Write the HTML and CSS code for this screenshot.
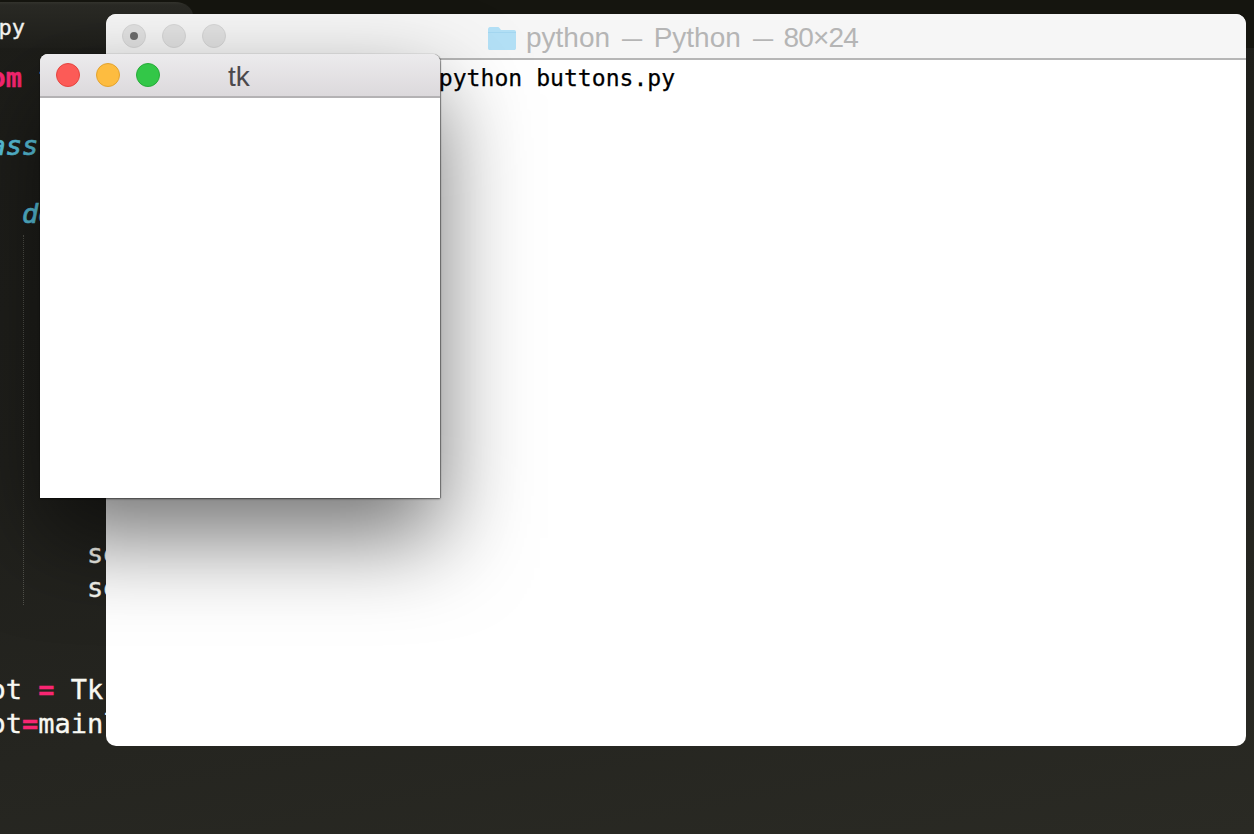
FILE: index.html
```html
<!DOCTYPE html>
<html lang="en">
<head>
<meta charset="utf-8">
<title>tk</title>
<link rel="stylesheet" href="styles.css">
</head>
<body>
<main class="desktop">
  <section class="editor">
    <div class="tabbar"><div class="tab"><span class="tab-name">buttons.py</span></div></div>
    <div class="code">
      <div class="guide"></div>
      <div class="line"><span class="kw">from</span> <span class="fn">tkinter</span> <span class="kw">import</span> *</div>
      <div class="line"></div>
      <div class="line"><span class="def">class</span> <span class="fn">App</span>:</div>
      <div class="line"></div>
      <div class="line">    <span class="def">def</span> __init__(self, master):</div>
      <div class="line"></div><div class="line"></div><div class="line"></div><div class="line"></div><div class="line"></div>
      <div class="line"></div><div class="line"></div><div class="line"></div><div class="line"></div>
      <div class="line dim">        self.button.pack()</div>
      <div class="line dim">        self.quit.pack()</div>
      <div class="line"></div>
      <div class="line"></div>
      <div class="line">root <span class="kw">=</span> Tk()</div>
      <div class="line">root<span class="kw">=</span>mainloop()</div>
    </div>
  </section>

  <section class="window terminal">
    <header class="term-bar">
      <div class="lights">
        <span class="light gray"><span class="dot"></span></span>
        <span class="light gray"></span>
        <span class="light gray"></span>
      </div>
      <div class="term-title">
        <svg class="folder" viewBox="0 0 30 25" width="30" height="25" aria-hidden="true">
          <path d="M1 3.500C1 2 1.800 1 3 1h7.500c1 0 1.600.4 2.200 1.200L14 4h13.200c1 0 1.800.8 1.800 1.800v16.400c0 1-.8 1.800-1.800 1.800H2.800C1.800 24 1 23.200 1 22.200z" fill="#b3e0f6"/>
          <path d="M1 6.500h28" stroke="#a4d7f1" stroke-width="1" fill="none"/>
        </svg>
        <span>python <span class="dash">—</span> Python <span class="dash">—</span> <span class="size">80×24</span></span>
      </div>
    </header>
    <div class="term-body">$ python buttons.py</div>
  </section>

  <section class="window tk">
    <header class="tk-bar">
      <div class="lights">
        <span class="light red"></span>
        <span class="light yellow"></span>
        <span class="light green"></span>
      </div>
      <span class="tk-title">tk</span>
    </header>
    <div class="tk-body"></div>
  </section>
</main>
</body>
</html>
```
FILE: styles.css
```css
html, body {
  margin: 0;
  padding: 0;
  width: 1254px;
  height: 834px;
  overflow: hidden;
}

.desktop {
  position: relative;
  width: 1254px;
  height: 834px;
  overflow: hidden;
  background: #282822;
}

.editor {
  position: absolute;
  inset: 0;
  background: linear-gradient(170deg, #1d1d19 0%, #20201c 45%, #2a2a24 100%);
  font-family: "DejaVu Sans Mono", monospace;
  color: #f8f8f2;
  -webkit-text-stroke: .35px currentColor;
}

.tabbar {
  height: 48px;
  background: #15150f;
  padding-top: 2px;
  box-sizing: border-box;
}

.tab {
  width: 193px;
  height: 46px;
  background: linear-gradient(#34342e 0, #2a2a25 3px, #1f1f1b 100%);
  border-top-right-radius: 18px 14px;
  overflow: hidden;
  position: relative;
}

.tab-name {
  position: absolute;
  right: 168px;
  top: 9px;
  font-size: 22px;
  line-height: 34px;
  white-space: pre;
  color: #f4f4f0;
}

.code {
  position: relative;
  padding-top: 13px;
  margin-left: -43px;
  font-size: 27px;
  line-height: 34px;
  font-weight: 400;
}

.line {
  height: 34px;
  white-space: pre;
}

.dim {
  color: #f8f8f2;
}

.kw {
  color: #f92672;
  font-weight: 700;
}

.def {
  color: #5ac6e0;
  font-style: italic;
  -webkit-text-stroke: .7px currentColor;
}

.fn {
  color: #5ac6e0;
}

.guide {
  position: absolute;
  left: 66px;
  top: 187px;
  height: 370px;
  border-left: 1px dotted #50504a;
}

.window {
  position: absolute;
  background: #fff;
}

.terminal {
  left: 106px;
  top: 14px;
  width: 1140px;
  height: 732px;
  border-radius: 10px;
  overflow: hidden;
}

.term-bar {
  position: relative;
  height: 44px;
  background: #f6f6f6;
  border-bottom: 2px solid #b6b6b6;
  display: flex;
  align-items: center;
}

.lights {
  display: flex;
  gap: 16px;
  padding-left: 16px;
}

.light {
  width: 24px;
  height: 24px;
  border-radius: 50%;
  box-sizing: border-box;
  border: 1px solid transparent;
  display: flex;
  align-items: center;
  justify-content: center;
}

.gray {
  background: #e2e2e2;
  border-color: #d6d6d6;
}

.dot {
  width: 8px;
  height: 8px;
  border-radius: 50%;
  background: #6c6c6c;
}

.red {
  background: #fc5b57;
  border-color: #e5453f;
}

.yellow {
  background: #fdbc40;
  border-color: #e3a32f;
}

.green {
  background: #33c748;
  border-color: #27ab39;
}

.term-title {
  position: absolute;
  left: 381px;
  top: 9px;
  display: flex;
  align-items: center;
  gap: 9px;
  font-family: "Liberation Sans", Arial, sans-serif;
  font-size: 28px;
  line-height: 30px;
  color: #b5b5b5;
  white-space: pre;
}

.dash {
  display: inline-block;
  transform: scaleX(.72);
}

.size {
  letter-spacing: -.8px;
  margin-left: -1px;
}

.term-body {
  padding: 4px 0 0 305px;
  font-family: "DejaVu Sans Mono", monospace;
  font-size: 23.100px;
  line-height: 28px;
  color: #000;
  white-space: pre;
  -webkit-text-stroke: .25px #000;
}

.tk {
  left: 40px;
  top: 54px;
  width: 400px;
  height: 444px;
  border-radius: 8px 8px 0 0;
  box-shadow: 0 40px 90px rgba(0, 0, 0, .55), 0 1px 2px rgba(0, 0, 0, .55), 1px 0 1px rgba(0, 0, 0, .35);
}

.tk-bar {
  position: relative;
  height: 42px;
  border-radius: 8px 8px 0 0;
  background: linear-gradient(#ecebed, #dcd9dc);
  border-bottom: 2px solid #b4b2b4;
  display: flex;
  align-items: center;
}

.tk-title {
  position: absolute;
  left: 188px;
  top: 8px;
  font-family: "Liberation Sans", Arial, sans-serif;
  font-size: 28px;
  line-height: 30px;
  color: #4c494c;
}

.tk-body {
  height: 400px;
  background: #fff;
}
```
